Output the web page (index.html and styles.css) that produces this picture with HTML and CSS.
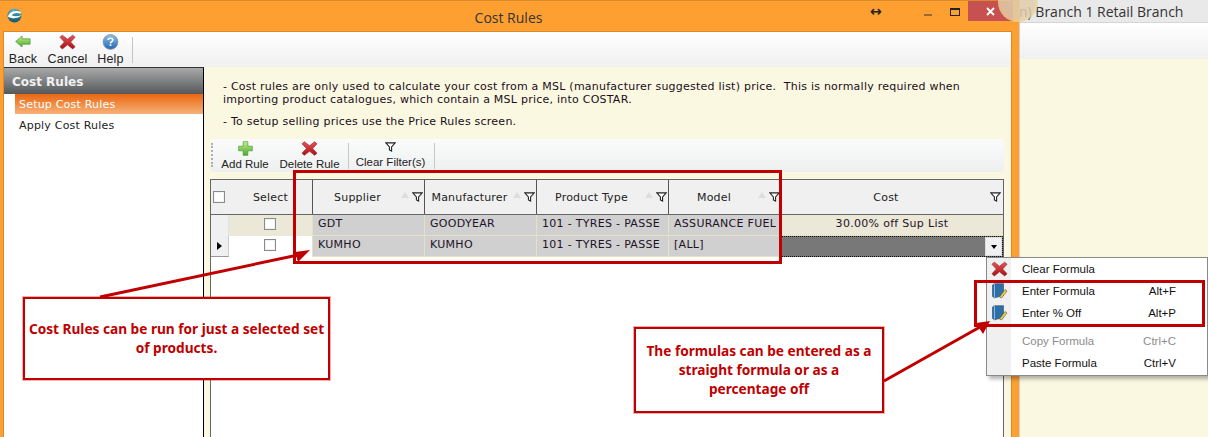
FILE: index.html
```html
<!DOCTYPE html>
<html lang="en">
<head>
<meta charset="utf-8">
<title>Cost Rules</title>
<link rel="stylesheet" href="styles.css">
</head>
<body>
<svg class="defs" width="0" height="0">
  <defs>
    <linearGradient id="gx" x1="0" y1="0" x2="0" y2="1"><stop offset="0" stop-color="#e8545a"/><stop offset="1" stop-color="#a80f14"/></linearGradient>
    <linearGradient id="gb" x1="0" y1="0" x2="0" y2="1"><stop offset="0" stop-color="#c6f08a"/><stop offset="1" stop-color="#49a82c"/></linearGradient>
    <linearGradient id="gh" x1="0" y1="0" x2="0" y2="1"><stop offset="0" stop-color="#8fc3ee"/><stop offset="1" stop-color="#1f66b4"/></linearGradient>
    <linearGradient id="gl" x1="0" y1="0" x2="0" y2="1"><stop offset="0" stop-color="#5fb0c4"/><stop offset="1" stop-color="#0f5568"/></linearGradient>
    <symbol id="i-x" viewBox="0 0 18 16"><path d="M1 3 3.500.8 9 5 14.500.8 17 3 12.300 8 17 13 14.500 15.300 9 11 3.500 15.300 1 13 5.700 8Z" fill="url(#gx)" stroke="#8f2a2d" stroke-width=".7"/></symbol>
    <symbol id="i-back" viewBox="0 0 18 14"><path d="M.7 7 8 .8V4H17V10H8V13.200Z" fill="url(#gb)" stroke="#4c9a34" stroke-width=".8"/></symbol>
    <symbol id="i-help" viewBox="0 0 17 17"><circle cx="8.500" cy="8.500" r="7.800" fill="url(#gh)" stroke="#7c8da0"/><path d="M6 6.400C6 3.800 11 3.800 11 6.400 11 8.300 8.500 8 8.500 10" fill="none" stroke="#fff" stroke-width="1.700"/><rect x="7.600" y="11" width="1.800" height="1.800" fill="#fff"/></symbol>
    <symbol id="i-plus" viewBox="0 0 16 16"><path d="M5.500 .7H10.500V5.500H15.300V10.500H10.500V15.300H5.500V10.500H.7V5.500H5.500Z" fill="url(#gb)" stroke="#4c9a34" stroke-width=".7"/></symbol>
    <symbol id="i-filter" viewBox="0 0 12 11"><path d="M.8 1H11.200L7.200 5.500V10L4.800 8.800V5.500Z" fill="#fff" stroke="#222" stroke-width="1.200"/></symbol>
    <symbol id="i-book" viewBox="0 0 16 16"><path d="M1 2 3 .7H12V12.500L3 14.800 1 13.500Z" fill="#2f6fa8" stroke="#1d4c78" stroke-width=".6"/><path d="M3 1V14.500" stroke="#8db8dc" stroke-width="1"/><path d="M8 14 13.500 6.500 15.500 8 10 15Z" fill="#f0cf4a" stroke="#5f5320" stroke-width=".6"/></symbol>
    <symbol id="i-logo" viewBox="0 0 16 16"><circle cx="8" cy="8" r="7.500" fill="url(#gl)"/><path d="M.8 9C3 3.500 9 2 15 4.300L14.300 6.200C10.500 4.500 7 5.500 5 7.800 8 9.300 12 9 15.500 7.500 12 11.500 5 12 .8 9Z" fill="#fff"/></symbol>
  </defs>
</svg>

<div class="window">
  <header class="titlebar">
    <svg class="logo"><use href="#i-logo"/></svg>
    <div class="title">Cost Rules</div>
    <div class="caption">
      <span class="cap-resize">↔</span>
      <span class="cap-min"></span>
      <span class="cap-max"></span>
      <span class="cap-close"><svg width="9" height="9" viewBox="0 0 9 9"><path d="M1 1 8 8M8 1 1 8" stroke="#fff" stroke-width="1.800"/></svg></span>
    </div>
  </header>
  <div class="client">
    <div class="toolbar">
      <div class="tool t-back"><svg class="ic-back"><use href="#i-back"/></svg><span>Back</span></div>
      <div class="tool t-cancel"><svg class="ic-big"><use href="#i-x"/></svg><span>Cancel</span></div>
      <div class="tool t-help"><svg class="ic-big"><use href="#i-help"/></svg><span>Help</span></div>
      <div class="tool-sep"></div>
    </div>
    <div class="body">
      <nav class="side">
        <div class="side-head">Cost Rules</div>
        <div class="side-item active">Setup Cost Rules</div>
        <div class="side-item">Apply Cost Rules</div>
      </nav>
      <main class="main">
        <div class="notes">
          <p>- Cost rules are only used to calculate your cost from a MSL (manufacturer suggested list) price.  This is normally required when<br>importing product catalogues, which contain a MSL price, into COSTAR.</p>
          <p>- To setup selling prices use the Price Rules screen.</p>
        </div>
        <div class="gridbar">
          <span class="grip"></span>
          <div class="gb-btn w-add"><svg class="ic-grid"><use href="#i-plus"/></svg><span>Add Rule</span></div>
          <div class="gb-btn w-del"><svg class="ic-grid"><use href="#i-x"/></svg><span>Delete Rule</span></div>
          <span class="gb-sep"></span>
          <div class="gb-btn w-clr"><svg class="ic-filter"><use href="#i-filter"/></svg><span>Clear Filter(s)</span></div>
          <span class="gb-sep"></span>
        </div>
        <div class="grid">
          <div class="row head">
            <div class="c c-corner"><span class="chk"></span></div>
            <div class="c c-sel">Select</div>
            <div class="c c-sup hcell"><span>Supplier</span><i class="sort"></i><svg class="hf"><use href="#i-filter"/></svg></div>
            <div class="c c-man hcell"><span>Manufacturer</span><i class="sort"></i><svg class="hf"><use href="#i-filter"/></svg></div>
            <div class="c c-pro hcell"><span>Product Type</span><i class="sort"></i><svg class="hf"><use href="#i-filter"/></svg></div>
            <div class="c c-mod hcell"><span>Model</span><i class="sort"></i><svg class="hf"><use href="#i-filter"/></svg></div>
            <div class="c c-cost hcell"><span>Cost</span><svg class="hf"><use href="#i-filter"/></svg></div>
          </div>
          <div class="row data alt">
            <div class="c c-rh"></div>
            <div class="c c-sel"><span class="chk"></span></div>
            <div class="c c-sup d">GDT</div>
            <div class="c c-man d">GOODYEAR</div>
            <div class="c c-pro d">101 - TYRES - PASSE</div>
            <div class="c c-mod d">ASSURANCE FUEL</div>
            <div class="c c-cost v">30.00% off Sup List</div>
          </div>
          <div class="row data cur">
            <div class="c c-rh"><i class="cur-arrow"></i></div>
            <div class="c c-sel"><span class="chk"></span></div>
            <div class="c c-sup d">KUMHO</div>
            <div class="c c-man d">KUMHO</div>
            <div class="c c-pro d">101 - TYRES - PASSE</div>
            <div class="c c-mod d">[ALL]</div>
            <div class="c c-cost e"><span class="drop"><i></i></span></div>
          </div>
        </div>
      </main>
    </div>
  </div>
</div>

<aside class="backdrop">
  <div class="bd-top">n) Branch 1 Retail Branch</div>
  <div class="bd-tool"></div>
  <div class="bd-cream"></div>
</aside>
<div class="glow"></div>

<div class="menu">
  <div class="mi"><svg class="mi-ic x"><use href="#i-x"/></svg><span class="mt">Clear Formula</span></div>
  <div class="mi"><svg class="mi-ic"><use href="#i-book"/></svg><span class="mt">Enter Formula</span><span class="ms">Alt+F</span></div>
  <div class="mi"><svg class="mi-ic"><use href="#i-book"/></svg><span class="mt">Enter % Off</span><span class="ms">Alt+P</span></div>
  <div class="mi-sep"></div>
  <div class="mi off"><span class="mi-ic"></span><span class="mt">Copy Formula</span><span class="ms">Ctrl+C</span></div>
  <div class="mi"><span class="mi-ic"></span><span class="mt">Paste Formula</span><span class="ms">Ctrl+V</span></div>
</div>

<div class="mark mark-cols"></div>
<div class="mark mark-menu"></div>
<svg class="arrows" width="1208" height="437" viewBox="0 0 1208 437">
  <path d="M100 297 298 255" stroke="#c00000" stroke-width="3" fill="none"/>
  <path d="M310 250 295 252 298 262Z" fill="#c00000"/>
  <path d="M884 381 980 327" stroke="#c00000" stroke-width="3" fill="none"/>
  <path d="M990 321 976 323 983 334Z" fill="#c00000"/>
</svg>
<div class="callout call-a">Cost Rules can be run for just a selected set of products.</div>
<div class="callout call-b">The formulas can be entered as a straight formula or as a percentage off</div>
</body>
</html>
```
FILE: styles.css
```css
* { box-sizing: border-box; }
html, body { margin: 0; height: 437px; overflow: hidden; }
body { display: flex; width: 1208px; font-family: "DejaVu Sans", sans-serif; font-size: 11px; color: #111; background: #fff; position: relative; }
.defs { position: absolute; }

/* window */
.window { width: 1020px; height: 437px; flex: none; display: flex; flex-direction: column; background: #fd9f31; border-top: 1px solid #d98a2c; border-right: 1px solid #d0d0d0; padding: 0 7px 0 3px; }
.titlebar { height: 30px; flex: none; display: flex; align-items: flex-start; position: relative; margin: 0 -7px 0 -3px; }
.logo { width: 15px; height: 15px; margin: 7px 0 0 7px; flex: none; }
.title { position: absolute; left: 0; width: 1017px; top: 7px; text-align: center; font: 14px "Open Sans", sans-serif; color: #333; }
.caption { margin-left: auto; display: flex; height: 20px; }
.cap-resize { position: absolute; left: 870px; top: 1px; font: bold 14px/18px "DejaVu Sans", sans-serif; color: #222; }
.cap-min { position: absolute; left: 924px; top: 13px; width: 8px; height: 2px; background: #9a6a35; }
.cap-max { position: absolute; left: 950px; top: 7px; width: 10px; height: 8px; border: 1px solid #222; border-top-width: 2px; }
.cap-close { position: absolute; left: 968px; top: 0; width: 45px; height: 20px; background: #c75050; display: flex; align-items: center; justify-content: center; }
.client { flex: 1; min-height: 0; display: flex; flex-direction: column; border: 1px solid #d88a2c; border-bottom: 0; background: #fbf8e1; }
.toolbar { height: 35px; flex: none; display: flex; align-items: flex-start; padding: 2px 0 0 0; background: linear-gradient(#fff, #f0f0f0); }
.tool { display: flex; flex-direction: column; align-items: center; font: 12.500px/14px "Liberation Sans", sans-serif; letter-spacing: .2px; color: #222; flex: none; }
.tool span { margin-top: 2px; }
.t-back { width: 38px; }
.t-cancel { width: 51px; }
.t-help { width: 35px; }
.ic-back { width: 16px; height: 13px; margin: 1px 0 2px; }
.ic-big { width: 17px; height: 16px; }
.tool-sep { width: 1px; height: 26px; background: #c4c4c4; margin: 3px 0 0 4px; }

.body { flex: 1; min-height: 0; display: flex; }
.side { width: 200px; flex: none; background: #fff; border-right: 1px solid #000; border-top: 1px solid #333; }
.side-head { height: 26px; padding: 0 0 0 8px; font: bold 12px/28px "DejaVu Sans", sans-serif; color: #f1f1f1; background: linear-gradient(#a9a9a9, #54585a); }
.side-item { height: 21px; margin-left: 11px; padding-left: 4px; font: 11px/23px "DejaVu Sans", sans-serif; letter-spacing: .2px; color: #222; }
.side-item.active { height: 20px; line-height: 22px; color: #fff; background: linear-gradient(#ea660f, #f6b27a); }

.main { flex: 1; min-width: 0; padding: 0 7px 0 6px; display: flex; flex-direction: column; }
.notes { height: 72px; padding: 13px 0 0 13px; font-size: 11px; letter-spacing: .24px; line-height: 13px; color: #1a0d20; flex: none; }
.notes p { margin: 0 0 9px; white-space: pre; }

.gridbar { height: 33px; display: flex; align-items: flex-start; background: linear-gradient(#fbfbfb, #eef0f0); border-radius: 4px; flex: none; }
.grip { width: 1px; height: 24px; margin: 4px 8px 0 1px; border-left: 2px dotted #b0b0b0; }
.gb-btn { display: flex; flex-direction: column; align-items: center; font: 11.500px/14px "Liberation Sans", sans-serif; color: #222; white-space: nowrap; padding-top: 2px; flex: none; }
.gb-btn span { margin-top: 1px; }
.w-add { width: 48px; }
.w-del { width: 59px; margin-left: 11px; }
.w-clr { width: 69px; margin-left: 7px; padding-top: 3px; }
.w-clr span { margin-top: 3px; }
.ic-grid { width: 17px; height: 15px; }
.ic-filter { width: 11px; height: 10px; }
.gb-sep { width: 1px; height: 26px; background: #c8c8c8; margin: 4px 0 0 9px; flex: none; }

.grid { margin-top: 7px; flex: 1; background: #fff; border-left: 1px solid #666; border-right: 1px solid #666; border-top: 1px solid #666; }
.row { display: flex; }
.c { flex: none; display: flex; align-items: center; }
.c-corner, .c-rh { width: 18px; }
.c-sel { width: 83px; justify-content: center; }
.c-sup { width: 112px; }
.c-man { width: 112px; }
.c-pro { width: 132px; }
.c-mod { width: 113px; }
.c-cost { flex: 1; min-width: 0; }
.head { height: 35px; background: #f0f0f0; border-bottom: 1px solid #666; font-size: 11px; letter-spacing: .2px; color: #222; }
.head .c-corner { padding-left: 2px; }
.hcell { border-left: 1px solid #555; height: 100%; position: relative; justify-content: center; padding-right: 22px; }
.c-cost.hcell { padding-right: 13px; }
.sort { position: absolute; right: 15px; top: 12px; width: 0; height: 0; border: 4px solid transparent; border-top: 0; border-bottom: 6px solid #ddd; }
.hf { position: absolute; right: 1px; top: 12px; width: 11px; height: 10px; }
.c-cost .hf { right: 2px; }
.data { height: 21px; font-size: 11px; letter-spacing: .3px; color: #221228; }
.alt .c-rh { background: #f0f0f0; border-right: 1px solid #e4e4e4; }
.alt .c-sel, .alt .c-cost { background: #ece8d8; }
.cur .c-sel { background: #fff; }
.d { background: #d0d0d0; border-left: 1px solid #e6e0c4; border-bottom: 1px solid #e6e0c4; padding: 0 0 3px 4px; height: 100%; white-space: nowrap; overflow: hidden; }
.c-sup.d, .c-man.d, .c-pro.d, .c-mod.d { padding-left: 5px; }
.v { justify-content: center; padding: 0 0 3px 0; border-bottom: 1px solid #e6e0c4; }
.e { background: #787878; outline: 1px dotted #111; outline-offset: -1px; height: 100%; justify-content: flex-end; padding-right: 1px; }
.drop { width: 17px; height: 19px; background: #f0f0f0; border: 1px solid #ddd; display: flex; align-items: center; justify-content: center; }
.drop i { border: 3.500px solid transparent; border-top: 4px solid #000; border-bottom: 0; }
.data .c-sel { padding: 0 1px 4px 0; height: 100%; }
.c-rh { justify-content: center; height: 100%; }
.cur .c-rh { border-bottom: 1px solid #999; border-right: 1px solid #ccc; background: #f0f0f0; }
.cur-arrow { border: 4.500px solid transparent; border-left: 5px solid #000; border-right: 0; }
.chk { display: block; width: 12px; height: 12px; background: #fff; border: 1px solid #8a8a8a; box-shadow: inset 0 0 0 1px #f2f2f2; }

/* backdrop behind the window */
.backdrop { flex: 1; display: flex; flex-direction: column; min-width: 0; }
.bd-top { height: 23px; background: #e9e9e9; border-bottom: 1px solid #d6d6d6; padding: 3px 0 0 0; font: 14px/18px "Open Sans", sans-serif; text-indent: -1px; color: #333; white-space: nowrap; }
.bd-tool { height: 36px; background: linear-gradient(#fff, #f0f0f0); flex: none; }
.bd-cream { flex: 1; background: #fbf8e1; }
.glow { position: absolute; left: 998px; top: -18px; width: 40px; height: 40px; border-radius: 50%; background: radial-gradient(circle, rgba(225,205,170,.85) 55%, rgba(250,225,120,.7) 90%, rgba(250,225,120,0)); }

/* context menu */
.menu { position: absolute; left: 986px; top: 257px; width: 222px; height: 119px; background: linear-gradient(90deg, #f0f0f0 0 24px, #fff 24px); border: 1px solid #8a8a8a; box-shadow: 3px 3px 4px rgba(0,0,0,.3); font: 11.500px/22px "Liberation Sans", sans-serif; color: #111; }
.mi { height: 22px; display: flex; align-items: center; white-space: nowrap; }
.mi-ic { width: 17px; height: 16px; margin-left: 4px; flex: none; }
.mt { margin-left: 14px; flex: none; width: 120px; }
.ms { width: 34px; flex: none; text-align: right; white-space: nowrap; direction: rtl; }
.mi-sep { height: 6px; }
.off { color: #8c8c8c; }

/* annotations painted on top of the screenshot */
.arrows { position: absolute; left: 0; top: 0; pointer-events: none; }
.mark { position: absolute; border: 3px solid #c00000; }
.mark-cols { left: 293px; top: 170px; width: 489px; height: 94px; }
.mark-menu { left: 974px; top: 280px; width: 231px; height: 47px; }
.callout { position: absolute; display: flex; align-items: center; justify-content: center; text-align: center; background: #fff; border: 2px solid #c00000; box-shadow: 0 0 0 1px rgba(192,0,0,.3); color: #c00000; font: bold 13.650px/19px "Noto Sans", sans-serif; padding: 0 2px 2px; }
.call-a { left: 23px; top: 297px; width: 307px; height: 83px; }
.call-b { left: 634px; top: 327px; width: 250px; height: 86px; padding: 0 6px 2px; }
```
